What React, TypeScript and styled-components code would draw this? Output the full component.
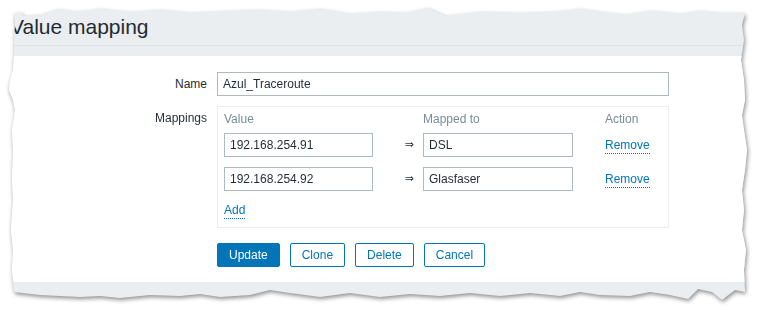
import styled, { createGlobalStyle } from "styled-components";

const GlobalStyle = createGlobalStyle`
    html, body {
        margin: 0;
        padding: 0;
        background: #ffffff;
    }
    body {
        font-family: "Liberation Sans", Arial, sans-serif;
        font-size: 12px;
        color: #1f2c33;
    }
`;

// torn paper outline of the screenshot clipping
const tornEdge = [
    [14, 14], [20, 12], [24, 16], [40, 15], [58, 9], [75, 12], [100, 9], [130, 12], [160, 10], [190, 13],
    [230, 11], [260, 10], [290, 12], [320, 9], [350, 14], [380, 12], [405, 13], [428, 8], [445, 16],
    [480, 12], [520, 13], [555, 12], [580, 9], [600, 12], [625, 15], [650, 11], [680, 14], [700, 11],
    [720, 13], [745, 13],
    [742, 25], [744, 40], [741, 60], [744, 80], [745, 100], [742, 115], [744, 130], [747, 150],
    [745, 170], [742, 190], [744, 210], [742, 230], [746, 250], [744, 270], [745, 292],
    [735, 290], [722, 300], [712, 292], [698, 289], [688, 299], [670, 295], [650, 292], [630, 296],
    [600, 295], [580, 292], [560, 296], [530, 293], [500, 296], [470, 293], [440, 296], [410, 294],
    [380, 297], [350, 293], [320, 297], [290, 293], [270, 290], [250, 295], [220, 297], [200, 294],
    [180, 296], [150, 295], [120, 298], [100, 296], [80, 297], [60, 296], [40, 295], [14, 292],
    [12, 270], [13, 250], [11, 230], [13, 200], [12, 180], [13, 150], [12, 130], [15, 110],
    [13, 100], [9, 90], [10, 80], [13, 70], [14, 55], [14, 40], [15, 25],
].map(([x, y]) => `${x}px ${y}px`).join(", ");

const Frame = styled.div`
    width: 762px;
    height: 312px;
    filter: drop-shadow(1px 2px 2px rgba(0, 0, 0, 0.45));
`;

const Sheet = styled.div`
    display: flex;
    flex-direction: column;
    height: 100%;
    background: #ebeef0;
    clip-path: polygon(${tornEdge});
`;

const Header = styled.div`
    display: flex;
    align-items: flex-end;
    height: 46px;
    padding: 0 0 6px 10px;
    box-sizing: border-box;
    border-bottom: 1px solid #dde2e5;
`;

const Title = styled.h1`
    margin: 0;
    font-size: 21px;
    font-weight: normal;
    line-height: 24px;
    color: #1f2c33;
`;

const Strip = styled.div`
    height: 10px;
`;

const Body = styled.div`
    background: #ffffff;
    padding: 16px 0 15px;
`;

const FormGrid = styled.div`
    display: grid;
    grid-template-columns: 207px 452px;
    column-gap: 10px;
    row-gap: 10px;
    align-items: start;
`;

const Label = styled.label<{ $top?: number; $center?: boolean }>`
    align-self: ${p => p.$center ? "center" : "start"};
    text-align: right;
    line-height: 16px;
    padding-top: ${p => p.$top ?? 0}px;
    color: #1f2c33;
`;

const TextInput = styled.input<{ $width: number }>`
    box-sizing: border-box;
    width: ${p => p.$width}px;
    height: 24px;
    padding: 0 5px;
    border: 1px solid #acbbc2;
    border-radius: 0;
    background: #ffffff;
    font-family: inherit;
    font-size: 12px;
    color: #1f2c33;
    outline: none;
`;

const MapBox = styled.div`
    border: 1px solid #ebeef0;
    padding: 4px 6px 8px;
`;

const MapRow = styled.div<{ $gap?: number }>`
    display: grid;
    grid-template-columns: 149px 50px 182px auto;
    align-items: center;
    margin-top: ${p => p.$gap ?? 0}px;
    line-height: 16px;
`;

const HeadCell = styled.div`
    color: #768d99;
`;

const Arrow = styled.span`
    justify-self: end;
    padding-right: 9px;
    font-family: "DejaVu Sans", sans-serif;
    font-size: 11px;
    color: #1f2c33;
`;

const Link = styled.a`
    justify-self: start;
    color: #0275b8;
    text-decoration: none;
    border-bottom: 1px dotted #0275b8;
    cursor: pointer;
`;

const Buttons = styled.div`
    grid-column: 2;
    display: flex;
    gap: 10px;
    margin-top: 5px;
`;

const Button = styled.button<{ $primary?: boolean }>`
    height: 24px;
    padding: 0 11px;
    border: 1px solid #0275b8;
    border-radius: 2px;
    background: ${p => p.$primary ? "#0275b8" : "#ffffff"};
    color: ${p => p.$primary ? "#ffffff" : "#0275b8"};
    font-family: inherit;
    font-size: 12px;
    cursor: pointer;
`;

const Footer = styled.div`
    flex: 1;
`;

const mappings = [
    { value: "192.168.254.91", mapped: "DSL" },
    { value: "192.168.254.92", mapped: "Glasfaser" },
];

export default function App() {
    return (
        <>
            <GlobalStyle/>
            <Frame>
                <Sheet>
                    <Header>
                        <Title>Value mapping</Title>
                    </Header>
                    <Strip/>
                    <Body>
                        <FormGrid>
                            <Label $center>Name</Label>
                            <TextInput $width={452} defaultValue="Azul_Traceroute"/>

                            <Label $top={4}>Mappings</Label>
                            <MapBox>
                                <MapRow>
                                    <HeadCell>Value</HeadCell>
                                    <span/>
                                    <HeadCell>Mapped to</HeadCell>
                                    <HeadCell>Action</HeadCell>
                                </MapRow>
                                {mappings.map((m, i) => (
                                    <MapRow key={m.value} $gap={i === 0 ? 6 : 10}>
                                        <TextInput $width={149} defaultValue={m.value}/>
                                        <Arrow>⇒</Arrow>
                                        <TextInput $width={150} defaultValue={m.mapped}/>
                                        <Link>Remove</Link>
                                    </MapRow>
                                ))}
                                <MapRow $gap={11}>
                                    <Link>Add</Link>
                                </MapRow>
                            </MapBox>

                            <Buttons>
                                <Button $primary>Update</Button>
                                <Button>Clone</Button>
                                <Button>Delete</Button>
                                <Button>Cancel</Button>
                            </Buttons>
                        </FormGrid>
                    </Body>
                    <Footer/>
                </Sheet>
            </Frame>
        </>
    );
}
